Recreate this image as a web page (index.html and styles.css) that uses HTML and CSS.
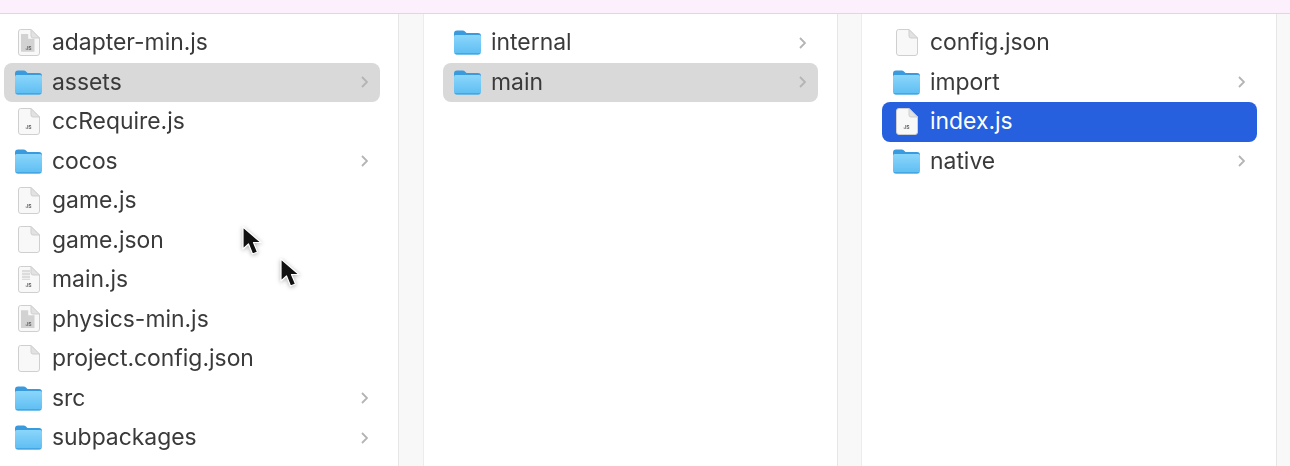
FILE: index.html
```html
<!DOCTYPE html>
<html lang="en">
<head>
    <meta charset="UTF-8">
    <meta name="viewport" content="width=device-width, initial-scale=1.0">
    <title>Finder</title>
    <link rel="stylesheet" href="styles.css">
</head>
<body>
    <svg class="sprites" width="0" height="0">
        <defs>
            <linearGradient id="folderFill" x1="0" y1="0" x2="0" y2="1">
                <stop offset="0" stop-color="#8ad6fb"/>
                <stop offset="1" stop-color="#5dbdf2"/>
            </linearGradient>
            <symbol id="folder" viewBox="0 0 27 25">
                <path d="M0 3.5Q0 .5 3 .5H9Q10.500 .5 11.500 2L12.500 3H24Q27 3 27 6V12H0Z" fill="#3a9ade"/>
                <path d="M0 6.500Q0 5 1.500 5H25.500Q27 5 27 6.500V21.500Q27 24.500 24 24.500H3Q0 24.500 0 21.500Z" fill="url(#folderFill)"/>
                <path d="M.5 23Q1 24.500 3 24.500H24Q26 24.500 26.500 23Z" fill="#45a6e4"/>
            </symbol>
            <symbol id="file" viewBox="0 0 22 27">
                <path d="M2.500 .5H13L21.500 9V24Q21.500 26.500 19 26.500H3Q.5 26.500 .5 24V3Q.5 .5 2.500 .5Z" fill="#f8f8f8" stroke="#cfcfcf"/>
                <path d="M13 .5V7Q13 9 15 9H21.500Z" fill="#e2e2e2" stroke="#cfcfcf"/>
            </symbol>
            <symbol id="chevron" viewBox="0 0 7 12">
                <path d="M1 1L6 6L1 11" fill="none" stroke="#b4b4b4" stroke-width="1.800"/>
            </symbol>
            <symbol id="arrow" viewBox="0 0 20 30">
                <path d="M1 1V23L6.500 18L10.500 28L15.500 26L11.500 16.500H19Z" fill="#111" stroke="#fff" stroke-width="1.200" stroke-linejoin="round"/>
            </symbol>
        </defs>
    </svg>

    <div class="window">
        <div class="topbar"></div>
        <div class="columns">
            <ul class="column first">
                <li class="row">
                    <span class="icon-file dense"><svg class="file"><use href="#file"/></svg><i></i><b>JS</b></span>
                    <span class="name">adapter-min.js</span>
                </li>
                <li class="row selected">
                    <svg class="folder"><use href="#folder"/></svg>
                    <span class="name">assets</span>
                    <svg class="chevron"><use href="#chevron"/></svg>
                </li>
                <li class="row">
                    <span class="icon-file"><svg class="file"><use href="#file"/></svg><b>JS</b></span>
                    <span class="name">ccRequire.js</span>
                </li>
                <li class="row">
                    <svg class="folder"><use href="#folder"/></svg>
                    <span class="name">cocos</span>
                    <svg class="chevron"><use href="#chevron"/></svg>
                </li>
                <li class="row">
                    <span class="icon-file"><svg class="file"><use href="#file"/></svg><b>JS</b></span>
                    <span class="name">game.js</span>
                </li>
                <li class="row">
                    <span class="icon-file"><svg class="file"><use href="#file"/></svg></span>
                    <span class="name">game.json</span>
                </li>
                <li class="row">
                    <span class="icon-file"><svg class="file"><use href="#file"/></svg><i></i><b>JS</b></span>
                    <span class="name">main.js</span>
                </li>
                <li class="row">
                    <span class="icon-file dense"><svg class="file"><use href="#file"/></svg><i></i><b>JS</b></span>
                    <span class="name">physics-min.js</span>
                </li>
                <li class="row">
                    <span class="icon-file"><svg class="file"><use href="#file"/></svg></span>
                    <span class="name">project.config.json</span>
                </li>
                <li class="row">
                    <svg class="folder"><use href="#folder"/></svg>
                    <span class="name">src</span>
                    <svg class="chevron"><use href="#chevron"/></svg>
                </li>
                <li class="row">
                    <svg class="folder"><use href="#folder"/></svg>
                    <span class="name">subpackages</span>
                    <svg class="chevron"><use href="#chevron"/></svg>
                </li>
            </ul>
            <div class="gutter"></div>
            <ul class="column second">
                <li class="row">
                    <svg class="folder"><use href="#folder"/></svg>
                    <span class="name">internal</span>
                    <svg class="chevron"><use href="#chevron"/></svg>
                </li>
                <li class="row selected">
                    <svg class="folder"><use href="#folder"/></svg>
                    <span class="name">main</span>
                    <svg class="chevron"><use href="#chevron"/></svg>
                </li>
            </ul>
            <div class="gutter"></div>
            <ul class="column third">
                <li class="row">
                    <span class="icon-file"><svg class="file"><use href="#file"/></svg></span>
                    <span class="name">config.json</span>
                </li>
                <li class="row">
                    <svg class="folder"><use href="#folder"/></svg>
                    <span class="name">import</span>
                    <svg class="chevron"><use href="#chevron"/></svg>
                </li>
                <li class="row active">
                    <span class="icon-file"><svg class="file"><use href="#file"/></svg><b>JS</b></span>
                    <span class="name">index.js</span>
                </li>
                <li class="row">
                    <svg class="folder"><use href="#folder"/></svg>
                    <span class="name">native</span>
                    <svg class="chevron"><use href="#chevron"/></svg>
                </li>
            </ul>
            <div class="gutter last"></div>
        </div>
    </div>

    <svg class="cursor cursor-a"><use href="#arrow"/></svg>
    <svg class="cursor cursor-b"><use href="#arrow"/></svg>
</body>
</html>
```

FILE: styles.css
```css
html, body {
    margin: 0;
    padding: 0;
    height: 100%;
    overflow: hidden;
    background-color: #ffffff;
}
body {
    font-family: Inter, "Liberation Sans", sans-serif;
    color: #3a3a3a;
}
.sprites {
    position: absolute;
}
.window {
    height: 466px;
    display: flex;
    flex-direction: column;
    filter: blur(0.7px);
}
.topbar {
    height: 13px;
    flex: none;
    background-color: #fbf0fb;
    border-bottom: 1px solid #dcdadc;
}
.columns {
    flex: 1;
    display: grid;
    grid-template-columns: 398px 26px 413px 25px 414px 14px;
    min-height: 0;
}
.gutter {
    background-color: #f8f8f8;
    border-left: 1px solid #e6e6e6;
    border-right: 1px solid #ececec;
}
.gutter.last {
    border-right: none;
}
.column {
    list-style: none;
    margin: 0;
    padding-top: 9px;
    display: grid;
    grid-auto-rows: 39.5px;
    align-content: start;
    overflow: hidden;
}
.column.first {
    padding-left: 4px;
    padding-right: 18px;
}
.column.second {
    padding-left: 19px;
    padding-right: 19px;
}
.column.third {
    padding-left: 20px;
    padding-right: 19px;
}
.row {
    display: flex;
    align-items: center;
    padding: 0 11px;
    border-radius: 8px;
    font-size: 22.900px;
    white-space: nowrap;
}
.row.selected {
    background-color: #d9d9d9;
}
.row.active {
    background-color: #2660de;
    color: #ffffff;
}
.folder {
    width: 27px;
    height: 25px;
    flex: none;
}
.icon-file {
    position: relative;
    width: 22px;
    height: 27px;
    flex: none;
    margin: 0 2.500px 1px;
}
.icon-file i {
    position: absolute;
    left: 4px;
    top: 4px;
    width: 8px;
    height: 10px;
    background: repeating-linear-gradient(#dcdcdc 0 2px, #efefef 2px 3px);
}
.icon-file.dense i {
    width: 14px;
    height: 18px;
    left: 3px;
    top: 5px;
    background: #d2d2d2;
    clip-path: polygon(0 0, 55% 0, 55% 28%, 100% 28%, 100% 100%, 0 100%);
}
.icon-file b {
    position: absolute;
    left: 0;
    right: 0;
    bottom: 5px;
    text-align: center;
    font-size: 5px;
    line-height: 5px;
    color: #666666;
}
.file {
    display: block;
    width: 22px;
    height: 27px;
}
.name {
    flex: 1;
    margin-left: 10px;
    padding-bottom: 1px;
}
.chevron {
    width: 7px;
    height: 12px;
    flex: none;
    margin-right: 1px;
}
.cursor {
    position: absolute;
    width: 20px;
    height: 30px;
    filter: blur(0.5px) drop-shadow(0 1px 2px rgba(0, 0, 0, 0.3));
}
.cursor-a {
    left: 242px;
    top: 226px;
}
.cursor-b {
    left: 280px;
    top: 258px;
}
```
